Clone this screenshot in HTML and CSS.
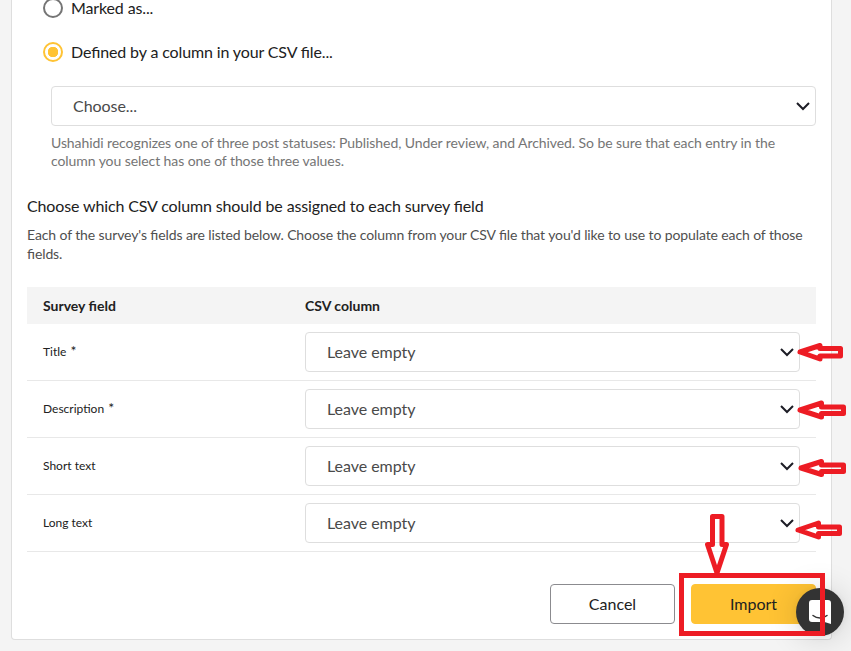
FILE: index.html
```html
<!DOCTYPE html>
<html lang="en">
<head>
    <meta charset="UTF-8">
    <meta name="viewport" content="width=device-width, initial-scale=1.0">
    <title>CSV Import</title>
    <link rel="stylesheet" href="styles.css">
</head>
<body>
    <main class="card">
        <div class="radio-group">
            <div class="radio">
                <span class="radio-circle"></span>
                <span class="radio-label">Marked as...</span>
            </div>
            <div class="radio radio-checked">
                <span class="radio-circle"></span>
                <span class="radio-label">Defined by a column in your CSV file...</span>
            </div>
        </div>

        <div class="status">
            <div class="select">
                <span>Choose...</span>
                <svg class="chevron" viewBox="0 0 14 9"><path d="M1 1l6 6 6-6"/></svg>
            </div>
            <p class="hint">Ushahidi recognizes one of three post statuses: Published, Under review, and Archived. So be sure that each entry in the column you select has one of those three values.</p>
        </div>

        <h2 class="title">Choose which CSV column should be assigned to each survey field</h2>
        <p class="description">Each of the survey's fields are listed below. Choose the column from your CSV file that you'd like to use to populate each of those fields.</p>

        <div class="table">
            <div class="row row-head">
                <div>Survey field</div>
                <div>CSV column</div>
            </div>
            <div class="row">
                <div class="field">Title <span class="required">*</span></div>
                <div class="select">
                    <span>Leave empty</span>
                    <svg class="chevron" viewBox="0 0 14 9"><path d="M1 1l6 6 6-6"/></svg>
                </div>
            </div>
            <div class="row">
                <div class="field">Description <span class="required">*</span></div>
                <div class="select">
                    <span>Leave empty</span>
                    <svg class="chevron" viewBox="0 0 14 9"><path d="M1 1l6 6 6-6"/></svg>
                </div>
            </div>
            <div class="row">
                <div class="field">Short text</div>
                <div class="select">
                    <span>Leave empty</span>
                    <svg class="chevron" viewBox="0 0 14 9"><path d="M1 1l6 6 6-6"/></svg>
                </div>
            </div>
            <div class="row">
                <div class="field">Long text</div>
                <div class="select">
                    <span>Leave empty</span>
                    <svg class="chevron" viewBox="0 0 14 9"><path d="M1 1l6 6 6-6"/></svg>
                </div>
            </div>
        </div>

        <div class="buttons">
            <button type="button" class="button">Cancel</button>
            <button type="button" class="button button-primary">Import</button>
        </div>
    </main>

    <div class="chat">
        <svg width="22" height="24" viewBox="0 0 22 24">
            <path fill="#fff" d="M3 0h16a3 3 0 0 1 3 3v21l-6.500-2H3a3 3 0 0 1-3-3V3a3 3 0 0 1 3-3z"/>
            <path fill="none" stroke="#333" stroke-width="1.500" stroke-linecap="round" d="M4 15.500c4 3.300 10 3.300 14 0"/>
        </svg>
    </div>

    <!-- red arrows and frame over the page -->
    <svg class="marks" width="851" height="651" viewBox="0 0 851 651">
        <path d="M800 352L820 345.500V348.500H840.500V356H820V359z"/>
        <path d="M800 410L821.500 403V407H843.500V413.500H821.500V417z"/>
        <path d="M801 468L821.500 461.500V465H843.500V471.500H821.500V474.500z"/>
        <path d="M798 530L818.500 523V527H839.500V533.500H818.500V537z"/>
        <path d="M712.500 516.500H722V544.500H726.500L717 573L707.500 544.500H712.500z"/>
        <rect x="681.500" y="575.500" width="141" height="58"/>
    </svg>
</body>
</html>
```
FILE: styles.css
```css
* {
    box-sizing: border-box;
}
body {
    margin: 0;
    height: 651px;
    overflow: hidden;
    background-color: #f4f4f4;
    color: #212121;
    font-family: Lato, sans-serif;
    font-size: 16px;
    font-feature-settings: "liga" 1;
}
.card {
    display: flex;
    flex-direction: column;
    width: 821px;
    height: 640px;
    margin-left: 11px;
    padding: 0 15px;
    background: #fff;
    border: 1px solid #dedede;
    border-top: none;
    border-radius: 0 0 4px 4px;
}
.radio-group {
    display: flex;
    flex-direction: column;
    gap: 24px;
    margin-top: -2px;
    padding-left: 16px;
}
.radio {
    display: flex;
    align-items: center;
    gap: 8px;
    height: 20px;
}
.radio-label {
    line-height: 16px;
    letter-spacing: -0.13px;
}
.radio-circle {
    width: 20px;
    height: 20px;
    border: 2px solid #757575;
    border-radius: 50%;
}
.radio-checked .radio-circle {
    border-color: #ffc334;
    background: radial-gradient(circle, #ffc334 5px, #fff 5.5px);
}
.status {
    margin-top: 24px;
    padding-left: 24px;
}
.select {
    display: flex;
    align-items: center;
    justify-content: space-between;
    height: 40px;
    padding: 0 5px 0 21px;
    background: #fff;
    border: 1px solid #dedede;
    border-radius: 4px;
    color: #4a4a4a;
    letter-spacing: -0.05px;
}
.select span {
    padding-bottom: 2px;
}
.chevron {
    width: 14px;
    height: 9px;
    fill: none;
    stroke: #1d1d26;
    stroke-width: 2;
}
.hint {
    margin: 8px 0 0;
    color: #757575;
    font-size: 14px;
    line-height: 18px;
    letter-spacing: -0.075px;
}
.title {
    margin: 26px 0 0;
    font-size: 16px;
    font-weight: normal;
    line-height: 20px;
    letter-spacing: -0.13px;
}
.description {
    margin: 9px 0 0;
    color: #4f4f4f;
    font-size: 14px;
    line-height: 19px;
    letter-spacing: -0.11px;
}
.table {
    margin-top: 24px;
}
.row {
    display: grid;
    grid-template-columns: 262px 495px;
    align-items: center;
    height: 57px;
    padding-left: 16px;
    border-bottom: 1px solid #e8e8e8;
}
.row-head {
    height: 37px;
    background: #f4f4f4;
    border-bottom: none;
    font-size: 14px;
    font-weight: bold;
}
.field {
    padding-bottom: 2px;
    font-size: 12px;
}
.required {
    margin-left: 1px;
    font-size: 14px;
    line-height: 1;
}
.buttons {
    display: flex;
    justify-content: flex-end;
    gap: 16px;
    margin-top: 32px;
}
.button {
    width: 125px;
    height: 40px;
    padding: 0 0 2px;
    background: #fff;
    border: 1px solid #8b8b8f;
    border-radius: 4px;
    color: #212121;
    font-family: inherit;
    font-size: 16px;
    cursor: pointer;
}
.button-primary {
    background: #ffc334;
    border-color: #ffc334;
}
.chat {
    position: absolute;
    left: 796px;
    top: 588px;
    display: flex;
    align-items: center;
    justify-content: center;
    width: 48px;
    height: 48px;
    border-radius: 50%;
    background: #333;
    box-shadow: 0 1px 6px rgba(0, 0, 0, 0.06), 0 2px 32px rgba(0, 0, 0, 0.16);
}
.marks {
    position: absolute;
    left: 0;
    top: 0;
    fill: none;
    stroke: #ed1c24;
    stroke-width: 5;
    stroke-linejoin: round;
    pointer-events: none;
}
.marks rect {
    stroke-linejoin: miter;
}
```
